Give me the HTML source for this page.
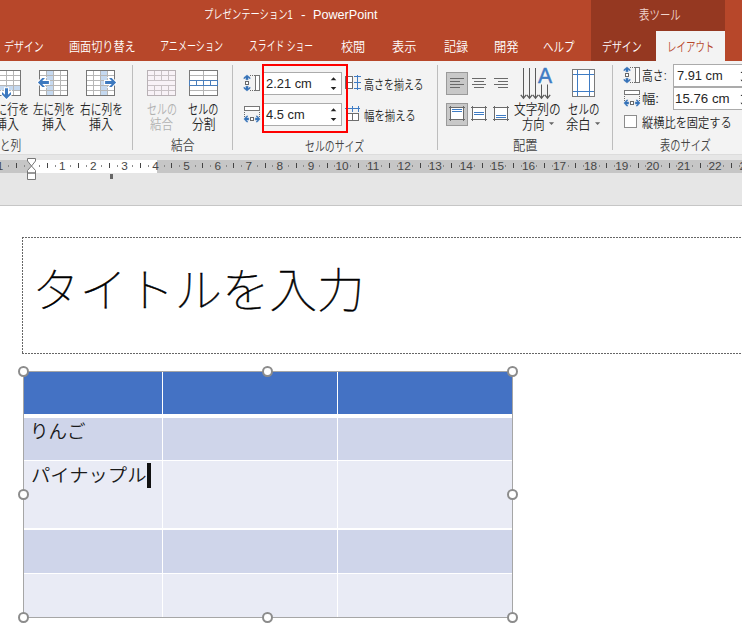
<!DOCTYPE html>
<html lang="ja">
<head>
<meta charset="utf-8">
<title>プレゼンテーション1 - PowerPoint</title>
<style>
html,body{margin:0;padding:0;}
body{width:742px;height:623px;overflow:hidden;position:relative;background:#fff;font-family:"Liberation Sans","Noto Sans CJK JP",sans-serif;}
.abs{position:absolute;}
.t{position:absolute;white-space:nowrap;transform-origin:0 50%;font-weight:350;}
#titlebar{left:0;top:0;width:742px;height:61px;background:#b7472a;}
#tooltab{left:591px;top:0;width:134px;height:61px;background:#953821;}
#acttab{left:656px;top:31px;width:69px;height:30px;background:#f3f3f3;}
#ribbon{left:0;top:61px;width:742px;height:93px;background:#f3f3f3;}
#gray{left:0;top:154px;width:742px;height:51px;background:#e6e6e6;}
#grayline{left:0;top:205px;width:742px;height:1px;background:#c6c6c6;}
.sep{position:absolute;top:65px;width:1px;height:85px;background:#bdbdbd;}
.inp{position:absolute;background:#fff;border:1px solid #ababab;box-sizing:border-box;}
#redbox{z-index:5;left:262px;top:64px;width:86px;height:69px;border:2px solid #fe0000;box-sizing:border-box;}
.selbtn{position:absolute;background:#c8c8c8;border:1px solid #9a9a9a;box-sizing:border-box;}
#rulerband{left:0;top:160px;width:742px;height:13px;background:#c6c6c6;}
#rulerwhite{left:32px;top:160px;width:125px;height:13px;background:#fff;}
#placeholder{left:22px;top:237px;width:760px;height:116px;border:1px dotted #6e6e6e;box-sizing:border-box;}
.cell{position:absolute;}
.rn{position:absolute;top:157.6px;width:24px;text-align:center;font-size:11.8px;line-height:17px;color:#474747;}
.hd{position:absolute;width:10.8px;height:10.8px;border:2px solid #8c8c8c;border-radius:50%;background:#fff;box-sizing:border-box;}
</style>
</head>
<body>
<div class="abs" id="titlebar"></div>
<div class="abs" id="tooltab"></div>
<div class="abs" id="acttab"></div>
<div class="abs" id="ribbon"></div>
<div class="abs" id="gray"></div>
<div class="abs" id="grayline"></div>
<div class="abs" style="left:0;top:154px;width:742px;height:1px;background:#dcdcdc"></div>
<div class="sep" style="left:132px"></div>
<div class="sep" style="left:232px"></div>
<div class="sep" style="left:437px"></div>
<div class="sep" style="left:612px"></div>

<!-- inputs -->
<div class="inp" style="left:263px;top:72px;width:79px;height:23px"></div>
<div class="inp" style="left:263px;top:103px;width:79px;height:23px"></div>
<div class="inp" style="left:673px;top:64px;width:80px;height:23px"></div>
<div class="inp" style="left:673px;top:87px;width:80px;height:23px"></div>
<div class="abs" style="left:624px;top:115px;width:13px;height:13px;border:1px solid #8c8c8c;background:#fff;box-sizing:border-box"></div>
<div class="selbtn" style="left:446px;top:72px;width:22px;height:23px"></div>
<div class="selbtn" style="left:446px;top:103px;width:22px;height:23px"></div>
<div class="abs" id="redbox"></div>

<!-- ruler -->
<div class="abs" id="rulerband"></div>
<div class="abs" id="rulerwhite"></div>
<div class="abs" style="left:8px;top:165px;width:1px;height:2px;background:#8a8a8a"></div>
<div class="abs" style="left:16px;top:163px;width:1px;height:5px;background:#444"></div>
<div class="abs" style="left:24px;top:165px;width:1px;height:2px;background:#8a8a8a"></div>
<div class="abs" style="left:39px;top:165px;width:1px;height:2px;background:#8a8a8a"></div>
<div class="abs" style="left:47px;top:163px;width:1px;height:5px;background:#444"></div>
<div class="abs" style="left:55px;top:165px;width:1px;height:2px;background:#8a8a8a"></div>
<div class="abs" style="left:70px;top:165px;width:1px;height:2px;background:#8a8a8a"></div>
<div class="abs" style="left:78px;top:163px;width:1px;height:5px;background:#444"></div>
<div class="abs" style="left:86px;top:165px;width:1px;height:2px;background:#8a8a8a"></div>
<div class="abs" style="left:101px;top:165px;width:1px;height:2px;background:#8a8a8a"></div>
<div class="abs" style="left:109px;top:163px;width:1px;height:5px;background:#444"></div>
<div class="abs" style="left:117px;top:165px;width:1px;height:2px;background:#8a8a8a"></div>
<div class="abs" style="left:132px;top:165px;width:1px;height:2px;background:#8a8a8a"></div>
<div class="abs" style="left:140px;top:163px;width:1px;height:5px;background:#444"></div>
<div class="abs" style="left:148px;top:165px;width:1px;height:2px;background:#8a8a8a"></div>
<div class="abs" style="left:164px;top:165px;width:1px;height:2px;background:#8a8a8a"></div>
<div class="abs" style="left:171px;top:163px;width:1px;height:5px;background:#444"></div>
<div class="abs" style="left:179px;top:165px;width:1px;height:2px;background:#8a8a8a"></div>
<div class="abs" style="left:195px;top:165px;width:1px;height:2px;background:#8a8a8a"></div>
<div class="abs" style="left:202px;top:163px;width:1px;height:5px;background:#444"></div>
<div class="abs" style="left:210px;top:165px;width:1px;height:2px;background:#8a8a8a"></div>
<div class="abs" style="left:226px;top:165px;width:1px;height:2px;background:#8a8a8a"></div>
<div class="abs" style="left:233px;top:163px;width:1px;height:5px;background:#444"></div>
<div class="abs" style="left:241px;top:165px;width:1px;height:2px;background:#8a8a8a"></div>
<div class="abs" style="left:257px;top:165px;width:1px;height:2px;background:#8a8a8a"></div>
<div class="abs" style="left:265px;top:163px;width:1px;height:5px;background:#444"></div>
<div class="abs" style="left:272px;top:165px;width:1px;height:2px;background:#8a8a8a"></div>
<div class="abs" style="left:288px;top:165px;width:1px;height:2px;background:#8a8a8a"></div>
<div class="abs" style="left:296px;top:163px;width:1px;height:5px;background:#444"></div>
<div class="abs" style="left:303px;top:165px;width:1px;height:2px;background:#8a8a8a"></div>
<div class="abs" style="left:319px;top:165px;width:1px;height:2px;background:#8a8a8a"></div>
<div class="abs" style="left:327px;top:163px;width:1px;height:5px;background:#444"></div>
<div class="abs" style="left:334px;top:165px;width:1px;height:2px;background:#8a8a8a"></div>
<div class="abs" style="left:350px;top:165px;width:1px;height:2px;background:#8a8a8a"></div>
<div class="abs" style="left:358px;top:163px;width:1px;height:5px;background:#444"></div>
<div class="abs" style="left:366px;top:165px;width:1px;height:2px;background:#8a8a8a"></div>
<div class="abs" style="left:381px;top:165px;width:1px;height:2px;background:#8a8a8a"></div>
<div class="abs" style="left:389px;top:163px;width:1px;height:5px;background:#444"></div>
<div class="abs" style="left:397px;top:165px;width:1px;height:2px;background:#8a8a8a"></div>
<div class="abs" style="left:412px;top:165px;width:1px;height:2px;background:#8a8a8a"></div>
<div class="abs" style="left:420px;top:163px;width:1px;height:5px;background:#444"></div>
<div class="abs" style="left:428px;top:165px;width:1px;height:2px;background:#8a8a8a"></div>
<div class="abs" style="left:443px;top:165px;width:1px;height:2px;background:#8a8a8a"></div>
<div class="abs" style="left:451px;top:163px;width:1px;height:5px;background:#444"></div>
<div class="abs" style="left:459px;top:165px;width:1px;height:2px;background:#8a8a8a"></div>
<div class="abs" style="left:474px;top:165px;width:1px;height:2px;background:#8a8a8a"></div>
<div class="abs" style="left:482px;top:163px;width:1px;height:5px;background:#444"></div>
<div class="abs" style="left:490px;top:165px;width:1px;height:2px;background:#8a8a8a"></div>
<div class="abs" style="left:505px;top:165px;width:1px;height:2px;background:#8a8a8a"></div>
<div class="abs" style="left:513px;top:163px;width:1px;height:5px;background:#444"></div>
<div class="abs" style="left:521px;top:165px;width:1px;height:2px;background:#8a8a8a"></div>
<div class="abs" style="left:536px;top:165px;width:1px;height:2px;background:#8a8a8a"></div>
<div class="abs" style="left:544px;top:163px;width:1px;height:5px;background:#444"></div>
<div class="abs" style="left:552px;top:165px;width:1px;height:2px;background:#8a8a8a"></div>
<div class="abs" style="left:568px;top:165px;width:1px;height:2px;background:#8a8a8a"></div>
<div class="abs" style="left:575px;top:163px;width:1px;height:5px;background:#444"></div>
<div class="abs" style="left:583px;top:165px;width:1px;height:2px;background:#8a8a8a"></div>
<div class="abs" style="left:599px;top:165px;width:1px;height:2px;background:#8a8a8a"></div>
<div class="abs" style="left:606px;top:163px;width:1px;height:5px;background:#444"></div>
<div class="abs" style="left:614px;top:165px;width:1px;height:2px;background:#8a8a8a"></div>
<div class="abs" style="left:630px;top:165px;width:1px;height:2px;background:#8a8a8a"></div>
<div class="abs" style="left:638px;top:163px;width:1px;height:5px;background:#444"></div>
<div class="abs" style="left:645px;top:165px;width:1px;height:2px;background:#8a8a8a"></div>
<div class="abs" style="left:661px;top:165px;width:1px;height:2px;background:#8a8a8a"></div>
<div class="abs" style="left:669px;top:163px;width:1px;height:5px;background:#444"></div>
<div class="abs" style="left:676px;top:165px;width:1px;height:2px;background:#8a8a8a"></div>
<div class="abs" style="left:692px;top:165px;width:1px;height:2px;background:#8a8a8a"></div>
<div class="abs" style="left:700px;top:163px;width:1px;height:5px;background:#444"></div>
<div class="abs" style="left:707px;top:165px;width:1px;height:2px;background:#8a8a8a"></div>
<div class="abs" style="left:723px;top:165px;width:1px;height:2px;background:#8a8a8a"></div>
<div class="abs" style="left:731px;top:163px;width:1px;height:5px;background:#444"></div>
<div class="abs" style="left:739px;top:165px;width:1px;height:2px;background:#8a8a8a"></div>
<span class="rn" style="left:-11.88px">1</span>
<span class="rn" style="left:50.28px">1</span>
<span class="rn" style="left:81.36px">2</span>
<span class="rn" style="left:112.44px">3</span>
<span class="rn" style="left:143.52px">4</span>
<span class="rn" style="left:174.60px">5</span>
<span class="rn" style="left:205.68px">6</span>
<span class="rn" style="left:236.76px">7</span>
<span class="rn" style="left:267.84px">8</span>
<span class="rn" style="left:298.92px">9</span>
<span class="rn" style="left:330.00px">10</span>
<span class="rn" style="left:361.08px">11</span>
<span class="rn" style="left:392.16px">12</span>
<span class="rn" style="left:423.24px">13</span>
<span class="rn" style="left:454.32px">14</span>
<span class="rn" style="left:485.40px">15</span>
<span class="rn" style="left:516.48px">16</span>
<span class="rn" style="left:547.56px">17</span>
<span class="rn" style="left:578.64px">18</span>
<span class="rn" style="left:609.72px">19</span>
<span class="rn" style="left:640.80px">20</span>
<span class="rn" style="left:671.88px">21</span>
<span class="rn" style="left:702.96px">22</span>
<span class="rn" style="left:734.04px">23</span>
<svg class="abs" style="left:26px;top:157px" width="12" height="24" viewBox="0 0 12 24"><path d="M1.5 1.5H9.5V4L5.5 9L1.5 4Z M5.5 9L9.5 13.5V16H1.5V13.5Z M1.5 16H9.5V22.5H1.5Z" fill="#fff" stroke="#777" stroke-width="1"/></svg>
<div class="abs" style="left:110px;top:174px;width:2.5px;height:5px;background:#666"></div>

<svg class="abs" style="left:0;top:0" width="742" height="160" viewBox="0 0 742 160">
<g shape-rendering="crispEdges">
<rect x="-8" y="70" width="28" height="25" fill="#fff"/>
<rect x="-8" y="86" width="28" height="4" fill="#c5d9f0"/>
<rect x="-1" y="70" width="1" height="25" fill="#b6b6b6"/>
<rect x="6" y="70" width="1" height="25" fill="#b6b6b6"/>
<rect x="13" y="70" width="1" height="25" fill="#b6b6b6"/>
<rect x="-8" y="75" width="28" height="1" fill="#b6b6b6"/>
<rect x="-8" y="80" width="28" height="1" fill="#b6b6b6"/>
<rect x="-8" y="85" width="28" height="1" fill="#b6b6b6"/>
<rect x="-8" y="90" width="28" height="1" fill="#b6b6b6"/>
<rect x="-7.5" y="70.5" width="28" height="25" fill="none" stroke="#767676" stroke-width="1"/>
<rect x="39" y="70" width="28" height="25" fill="#fff"/>
<rect x="47" y="70" width="6" height="25" fill="#c5d9f0"/>
<rect x="46" y="70" width="1" height="25" fill="#b6b6b6"/>
<rect x="53" y="70" width="1" height="25" fill="#b6b6b6"/>
<rect x="60" y="70" width="1" height="25" fill="#b6b6b6"/>
<rect x="39" y="75" width="28" height="1" fill="#b6b6b6"/>
<rect x="39" y="80" width="28" height="1" fill="#b6b6b6"/>
<rect x="39" y="85" width="28" height="1" fill="#b6b6b6"/>
<rect x="39" y="90" width="28" height="1" fill="#b6b6b6"/>
<rect x="39.5" y="70.5" width="28" height="25" fill="none" stroke="#767676" stroke-width="1"/>
<rect x="86" y="70" width="28" height="25" fill="#fff"/>
<rect x="101" y="70" width="6" height="25" fill="#c5d9f0"/>
<rect x="93" y="70" width="1" height="25" fill="#b6b6b6"/>
<rect x="100" y="70" width="1" height="25" fill="#b6b6b6"/>
<rect x="107" y="70" width="1" height="25" fill="#b6b6b6"/>
<rect x="86" y="75" width="28" height="1" fill="#b6b6b6"/>
<rect x="86" y="80" width="28" height="1" fill="#b6b6b6"/>
<rect x="86" y="85" width="28" height="1" fill="#b6b6b6"/>
<rect x="86" y="90" width="28" height="1" fill="#b6b6b6"/>
<rect x="86.5" y="70.5" width="28" height="25" fill="none" stroke="#767676" stroke-width="1"/>
<rect x="147" y="70" width="28" height="25" fill="#f8f2f7"/>
<rect x="154" y="70" width="1" height="10" fill="#c8c1c5"/>
<rect x="154" y="86" width="1" height="9" fill="#c8c1c5"/>
<rect x="161" y="70" width="1" height="10" fill="#c8c1c5"/>
<rect x="161" y="86" width="1" height="9" fill="#c8c1c5"/>
<rect x="168" y="70" width="1" height="10" fill="#c8c1c5"/>
<rect x="168" y="86" width="1" height="9" fill="#c8c1c5"/>
<rect x="147" y="75" width="28" height="1" fill="#c8c1c5"/>
<rect x="147" y="80" width="28" height="1" fill="#c8c1c5"/>
<rect x="147" y="85" width="28" height="1" fill="#c8c1c5"/>
<rect x="147" y="90" width="28" height="1" fill="#c8c1c5"/>
<rect x="147.5" y="70.5" width="28" height="25" fill="none" stroke="#b8b1b5" stroke-width="1"/>
<rect x="189" y="70" width="28" height="25" fill="#fff"/>
<rect x="203" y="70" width="1" height="25" fill="#b4b4b4"/>
<rect x="189" y="75" width="28" height="1" fill="#b4b4b4"/>
<rect x="189" y="80" width="28" height="1" fill="#b4b4b4"/>
<rect x="189" y="85" width="28" height="1" fill="#b4b4b4"/>
<rect x="189" y="90" width="28" height="1" fill="#b4b4b4"/>
<rect x="189.5" y="70.5" width="28" height="25" fill="none" stroke="#7a7a7a" stroke-width="1"/>
<rect x="189.5" y="80.5" width="28" height="5" fill="#fff" stroke="#4a7ebb" stroke-width="1"/>
<rect x="196" y="80" width="1" height="6" fill="#4a7ebb"/><rect x="203" y="80" width="1" height="6" fill="#4a7ebb"/><rect x="210" y="80" width="1" height="6" fill="#4a7ebb"/>
</g>
<polygon points="6.50,99.00 2.00,94.60 2.00,91.90 5.00,94.70 5.00,88.30 8.00,88.30 8.00,94.70 11.00,91.90 11.00,94.60" fill="#3d79bf" stroke="#fff" stroke-width="2" paint-order="stroke" stroke-linejoin="miter"/>
<polygon points="37.90,82.50 42.30,78.00 45.00,78.00 42.20,81.00 48.90,81.00 48.90,84.00 42.20,84.00 45.00,87.00 42.30,87.00" fill="#3d79bf" stroke="#fff" stroke-width="2" paint-order="stroke" stroke-linejoin="miter"/>
<polygon points="116.10,82.50 111.70,78.00 109.00,78.00 111.80,81.00 105.10,81.00 105.10,84.00 111.80,84.00 109.00,87.00 111.70,87.00" fill="#3d79bf" stroke="#fff" stroke-width="2" paint-order="stroke" stroke-linejoin="miter"/>
<polygon points="247.00,74.90 243.90,77.60 243.90,79.00 245.90,77.40 245.90,79.70 248.10,79.70 248.10,77.40 250.10,79.00 250.10,77.60" fill="#3572b8" stroke="#3572b8" stroke-width="0.4"/>
<polygon points="247.00,91.10 243.90,88.40 243.90,87.00 245.90,88.60 245.90,86.30 248.10,86.30 248.10,88.60 250.10,87.00 250.10,88.40" fill="#3572b8" stroke="#3572b8" stroke-width="0.4"/>
<rect x="245.5" y="81.5" width="3" height="3" fill="#fff" stroke="#6a6a6a" stroke-width="1"/>
<path d="M250 75.5H255M250 90.5H255" stroke="#6a6a6a" stroke-width="1" stroke-dasharray="1 1" fill="none"/>
<rect x="255.5" y="75.5" width="4" height="15" fill="#fff" stroke="#777" stroke-width="1"/>
<rect x="244.5" y="106.5" width="15" height="4" fill="#fff" stroke="#777" stroke-width="1"/>
<path d="M244.5 112V117M259.5 112V117" stroke="#6a6a6a" stroke-width="1" stroke-dasharray="1 1" fill="none"/>
<polygon points="243.90,119.00 246.60,115.90 248.00,115.90 246.40,117.90 248.70,117.90 248.70,120.10 246.40,120.10 248.00,122.10 246.60,122.10" fill="#3572b8" stroke="#3572b8" stroke-width="0.4"/>
<polygon points="260.10,119.00 257.40,115.90 256.00,115.90 257.60,117.90 255.30,117.90 255.30,120.10 257.60,120.10 256.00,122.10 257.40,122.10" fill="#3572b8" stroke="#3572b8" stroke-width="0.4"/>
<rect x="250.5" y="117.5" width="3" height="3" fill="#fff" stroke="#6a6a6a" stroke-width="1"/>
<polygon points="627.00,66.90 623.90,69.60 623.90,71.00 625.90,69.40 625.90,71.70 628.10,71.70 628.10,69.40 630.10,71.00 630.10,69.60" fill="#3572b8" stroke="#3572b8" stroke-width="0.4"/>
<polygon points="627.00,83.10 623.90,80.40 623.90,79.00 625.90,80.60 625.90,78.30 628.10,78.30 628.10,80.60 630.10,79.00 630.10,80.40" fill="#3572b8" stroke="#3572b8" stroke-width="0.4"/>
<rect x="625.5" y="73.5" width="3" height="3" fill="#fff" stroke="#6a6a6a" stroke-width="1"/>
<path d="M630 67.5H635M630 82.5H635" stroke="#6a6a6a" stroke-width="1" stroke-dasharray="1 1" fill="none"/>
<rect x="635.5" y="67.5" width="4" height="15" fill="#fff" stroke="#777" stroke-width="1"/>
<rect x="624.5" y="90.5" width="15" height="4" fill="#fff" stroke="#777" stroke-width="1"/>
<path d="M624.5 96V101M639.5 96V101" stroke="#6a6a6a" stroke-width="1" stroke-dasharray="1 1" fill="none"/>
<polygon points="623.90,103.00 626.60,99.90 628.00,99.90 626.40,101.90 628.70,101.90 628.70,104.10 626.40,104.10 628.00,106.10 626.60,106.10" fill="#3572b8" stroke="#3572b8" stroke-width="0.4"/>
<polygon points="640.10,103.00 637.40,99.90 636.00,99.90 637.60,101.90 635.30,101.90 635.30,104.10 637.60,104.10 636.00,106.10 637.40,106.10" fill="#3572b8" stroke="#3572b8" stroke-width="0.4"/>
<rect x="630.5" y="101.5" width="3" height="3" fill="#fff" stroke="#6a6a6a" stroke-width="1"/>
<g shape-rendering="crispEdges">
<rect x="345.5" y="76.5" width="7" height="12" fill="#fff" stroke="#6e6e6e"/><rect x="346" y="82" width="7" height="1" fill="#6e6e6e"/>
<rect x="357" y="75" width="1" height="15" fill="#3f7cc4"/><rect x="354" y="76" width="7" height="1" fill="#3f7cc4"/><rect x="354" y="82" width="7" height="1" fill="#3f7cc4"/><rect x="354" y="88" width="7" height="1" fill="#3f7cc4"/>
<rect x="346.5" y="113.5" width="12" height="7" fill="#fff" stroke="#6e6e6e"/><rect x="352" y="113" width="1" height="8" fill="#6e6e6e"/>
<rect x="345" y="108" width="15" height="1" fill="#3f7cc4"/><rect x="352" y="106" width="1" height="6" fill="#3f7cc4"/><rect x="358" y="106" width="1" height="6" fill="#3f7cc4"/>
<rect x="450" y="78" width="14" height="1" fill="#6a6a6a"/>
<rect x="472" y="78" width="14" height="1" fill="#6a6a6a"/>
<rect x="494" y="78" width="14" height="1" fill="#6a6a6a"/>
<rect x="450" y="81" width="10" height="1" fill="#6a6a6a"/>
<rect x="474" y="81" width="10" height="1" fill="#6a6a6a"/>
<rect x="498" y="81" width="10" height="1" fill="#6a6a6a"/>
<rect x="450" y="84" width="14" height="1" fill="#6a6a6a"/>
<rect x="472" y="84" width="14" height="1" fill="#6a6a6a"/>
<rect x="494" y="84" width="14" height="1" fill="#6a6a6a"/>
<rect x="450" y="87" width="10" height="1" fill="#6a6a6a"/>
<rect x="474" y="87" width="10" height="1" fill="#6a6a6a"/>
<rect x="498" y="87" width="10" height="1" fill="#6a6a6a"/>
<rect x="450.5" y="107.5" width="13" height="12" fill="#fff" stroke="#6a6a6a"/>
<rect x="450" y="106" width="1" height="15" fill="#6a6a6a"/><rect x="463" y="106" width="1" height="15" fill="#6a6a6a"/>
<rect x="449" y="107" width="16" height="1" fill="#6a6a6a"/><rect x="449" y="119" width="16" height="1" fill="#6a6a6a"/>
<rect x="452" y="109" width="10" height="1" fill="#3f7cc4"/><rect x="452" y="111" width="10" height="1" fill="#3f7cc4"/>
<rect x="472.5" y="107.5" width="13" height="12" fill="#fff" stroke="#6a6a6a"/>
<rect x="472" y="106" width="1" height="15" fill="#6a6a6a"/><rect x="485" y="106" width="1" height="15" fill="#6a6a6a"/>
<rect x="471" y="107" width="16" height="1" fill="#6a6a6a"/><rect x="471" y="119" width="16" height="1" fill="#6a6a6a"/>
<rect x="474" y="112" width="10" height="1" fill="#3f7cc4"/><rect x="474" y="114" width="10" height="1" fill="#3f7cc4"/>
<rect x="494.5" y="107.5" width="13" height="12" fill="#fff" stroke="#6a6a6a"/>
<rect x="494" y="106" width="1" height="15" fill="#6a6a6a"/><rect x="507" y="106" width="1" height="15" fill="#6a6a6a"/>
<rect x="493" y="107" width="16" height="1" fill="#6a6a6a"/><rect x="493" y="119" width="16" height="1" fill="#6a6a6a"/>
<rect x="496" y="115" width="10" height="1" fill="#3f7cc4"/><rect x="496" y="117" width="10" height="1" fill="#3f7cc4"/>
<rect x="572.5" y="69.5" width="22" height="27" fill="#fff" stroke="#7a7a7a"/>
<rect x="577" y="70" width="1" height="26" fill="#3f7cc4"/><rect x="589" y="70" width="1" height="26" fill="#3f7cc4"/><rect x="573" y="74" width="21" height="1" fill="#3f7cc4"/><rect x="573" y="91" width="21" height="1" fill="#3f7cc4"/>
</g>
<path d="M523.5 68V98" fill="none" stroke="#5a5a5a" stroke-width="1"/><path d="M520.8 94.8L523.5 98.2L526.2 94.8" fill="none" stroke="#5a5a5a" stroke-width="1.3"/>
<path d="M529.5 68V98" fill="none" stroke="#5a5a5a" stroke-width="1"/><path d="M526.8 94.8L529.5 98.2L532.2 94.8" fill="none" stroke="#5a5a5a" stroke-width="1.3"/>
<path d="M535.5 68V98" fill="none" stroke="#5a5a5a" stroke-width="1"/><path d="M532.8 94.8L535.5 98.2L538.2 94.8" fill="none" stroke="#5a5a5a" stroke-width="1.3"/>
<path d="M541.5 84.5V98" fill="none" stroke="#5a5a5a" stroke-width="1"/><path d="M538.8 94.8L541.5 98.2L544.2 94.8" fill="none" stroke="#5a5a5a" stroke-width="1.3"/>
<path d="M547.5 84.5V98" fill="none" stroke="#5a5a5a" stroke-width="1"/><path d="M544.8 94.8L547.5 98.2L550.2 94.8" fill="none" stroke="#5a5a5a" stroke-width="1.3"/>
<polygon points="330.7,80.2 333.5,77.2 336.3,80.2" fill="#222"/>
<polygon points="330.7,87.0 333.5,90.0 336.3,87.0" fill="#222"/>
<polygon points="330.7,111.3 333.5,108.3 336.3,111.3" fill="#222"/>
<polygon points="330.7,118.1 333.5,121.1 336.3,118.1" fill="#222"/>
<polygon points="740.5,73.0 743.3,70.0 746.0999999999999,73.0" fill="#222"/>
<polygon points="740.5,79.8 743.3,82.8 746.0999999999999,79.8" fill="#222"/>
<polygon points="740.5,96.0 743.3,93.0 746.0999999999999,96.0" fill="#222"/>
<polygon points="740.5,102.8 743.3,105.8 746.0999999999999,102.8" fill="#222"/>
<polygon points="548.9,122.2 554.1,122.2 551.5,124.9" fill="#666"/>
<polygon points="595.0,122.2 600.2,122.2 597.6,124.9" fill="#666"/>
</svg>

<!-- slide -->
<svg class="abs" style="left:0;top:230px" width="742" height="130" viewBox="0 230 742 130" shape-rendering="crispEdges"><path d="M22 237.5H742M22.5 237V354M22 353.5H742" fill="none" stroke="#666" stroke-width="1" stroke-dasharray="2 1"/></svg>
<div class="abs" style="left:23px;top:371px;width:490px;height:247px;background:#fff;border:1px solid #a6a6a6;box-sizing:border-box"></div>
<div class="cell" style="left:24px;top:372px;width:137.8px;height:42.10000000000002px;background:#4472c4"></div>
<div class="cell" style="left:163.2px;top:372px;width:173.60000000000002px;height:42.10000000000002px;background:#4472c4"></div>
<div class="cell" style="left:338.2px;top:372px;width:173.8px;height:42.10000000000002px;background:#4472c4"></div>
<div class="cell" style="left:24px;top:417.7px;width:137.8px;height:42.0px;background:#cfd5ea"></div>
<div class="cell" style="left:163.2px;top:417.7px;width:173.60000000000002px;height:42.0px;background:#cfd5ea"></div>
<div class="cell" style="left:338.2px;top:417.7px;width:173.8px;height:42.0px;background:#cfd5ea"></div>
<div class="cell" style="left:24px;top:461px;width:137.8px;height:67.10000000000002px;background:#e9ebf5"></div>
<div class="cell" style="left:163.2px;top:461px;width:173.60000000000002px;height:67.10000000000002px;background:#e9ebf5"></div>
<div class="cell" style="left:338.2px;top:461px;width:173.8px;height:67.10000000000002px;background:#e9ebf5"></div>
<div class="cell" style="left:24px;top:529.8px;width:137.8px;height:43.0px;background:#cfd5ea"></div>
<div class="cell" style="left:163.2px;top:529.8px;width:173.60000000000002px;height:43.0px;background:#cfd5ea"></div>
<div class="cell" style="left:338.2px;top:529.8px;width:173.8px;height:43.0px;background:#cfd5ea"></div>
<div class="cell" style="left:24px;top:574px;width:137.8px;height:43px;background:#e9ebf5"></div>
<div class="cell" style="left:163.2px;top:574px;width:173.60000000000002px;height:43px;background:#e9ebf5"></div>
<div class="cell" style="left:338.2px;top:574px;width:173.8px;height:43px;background:#e9ebf5"></div>
<div class="abs" style="left:147px;top:463px;width:3.6px;height:24.6px;background:#111"></div>
<div class="hd" style="left:18.10px;top:366.10px"></div>
<div class="hd" style="left:262.30px;top:366.10px"></div>
<div class="hd" style="left:507.10px;top:366.10px"></div>
<div class="hd" style="left:18.10px;top:489.00px"></div>
<div class="hd" style="left:507.10px;top:489.00px"></div>
<div class="hd" style="left:18.10px;top:612.10px"></div>
<div class="hd" style="left:262.30px;top:612.10px"></div>
<div class="hd" style="left:507.10px;top:612.10px"></div>

<span class="t" id="t0" style="left:203.96px;top:6.30px;font-size:12.5px;line-height:18.75px;color:#fff;transform:scaleX(0.7441);">プレゼンテーション1</span>
<span class="t" id="t1" style="left:301.40px;top:5.80px;font-size:12.5px;line-height:18.75px;color:#fff;transform:scaleX(1.1000);">-</span>
<span class="t" id="t2" style="left:313.49px;top:6.00px;font-size:12.5px;line-height:18.75px;color:#fff;transform:scaleX(1.0111);">PowerPoint</span>
<span class="t" id="t3" style="left:4.24px;top:36.80px;font-size:13px;line-height:19.5px;color:#fff;transform:scaleX(0.7620);">デザイン</span>
<span class="t" id="t4" style="left:69.14px;top:36.80px;font-size:13px;line-height:19.5px;color:#fff;transform:scaleX(0.8553);">画面切り替え</span>
<span class="t" id="t5" style="left:160.30px;top:35.80px;font-size:13px;line-height:19.5px;color:#fff;transform:scaleX(0.6966);">アニメーション</span>
<span class="t" id="t6" style="left:249.02px;top:36.30px;font-size:13px;line-height:19.5px;color:#fff;transform:scaleX(0.6785);">スライド ショー</span>
<span class="t" id="t7" style="left:341.30px;top:36.80px;font-size:13px;line-height:19.5px;color:#fff;transform:scaleX(0.9320);">校閲</span>
<span class="t" id="t8" style="left:392.00px;top:36.80px;font-size:13px;line-height:19.5px;color:#fff;transform:scaleX(0.9385);">表示</span>
<span class="t" id="t9" style="left:443.90px;top:36.80px;font-size:13px;line-height:19.5px;color:#fff;transform:scaleX(0.9269);">記録</span>
<span class="t" id="t10" style="left:493.66px;top:36.80px;font-size:13px;line-height:19.5px;color:#fff;transform:scaleX(0.9440);">開発</span>
<span class="t" id="t11" style="left:543.19px;top:37.30px;font-size:13px;line-height:19.5px;color:#fff;transform:scaleX(0.8105);">ヘルプ</span>
<span class="t" id="t12" style="left:602.24px;top:36.80px;font-size:13px;line-height:19.5px;color:#fff;transform:scaleX(0.7600);">デザイン</span>
<span class="t" id="t13" style="left:666.52px;top:36.80px;font-size:13px;line-height:19.5px;color:#b7472a;transform:scaleX(0.7283);">レイアウト</span>
<span class="t" id="t14" style="left:639.00px;top:5.00px;font-size:13px;line-height:19.5px;color:#f0d5cd;transform:scaleX(0.8039);">表ツール</span>
<span class="t" id="t15" style="left:-4.44px;top:100.30px;font-size:13.3px;line-height:19.950000000000003px;color:#262626;transform:scaleX(0.8405);">に行を</span>
<span class="t" id="t16" style="left:-5.20px;top:115.00px;font-size:13.3px;line-height:19.950000000000003px;color:#262626;transform:scaleX(0.9038);">挿入</span>
<span class="t" id="t17" style="left:33.00px;top:100.30px;font-size:13.3px;line-height:19.950000000000003px;color:#262626;transform:scaleX(0.7981);">左に列を</span>
<span class="t" id="t18" style="left:42.00px;top:114.80px;font-size:13.3px;line-height:19.950000000000003px;color:#262626;transform:scaleX(0.9038);">挿入</span>
<span class="t" id="t19" style="left:80.00px;top:100.30px;font-size:13.3px;line-height:19.950000000000003px;color:#262626;transform:scaleX(0.8077);">右に列を</span>
<span class="t" id="t20" style="left:89.00px;top:114.80px;font-size:13.3px;line-height:19.950000000000003px;color:#262626;transform:scaleX(0.9038);">挿入</span>
<span class="t" id="t21" style="left:146.75px;top:100.30px;font-size:13.3px;line-height:19.950000000000003px;color:#b1b1b1;transform:scaleX(0.7500);">セルの</span>
<span class="t" id="t22" style="left:150.00px;top:114.80px;font-size:13.3px;line-height:19.950000000000003px;color:#b1b1b1;transform:scaleX(0.8654);">結合</span>
<span class="t" id="t23" style="left:188.24px;top:100.30px;font-size:13.3px;line-height:19.950000000000003px;color:#262626;transform:scaleX(0.7632);">セルの</span>
<span class="t" id="t24" style="left:192.00px;top:114.80px;font-size:13.3px;line-height:19.950000000000003px;color:#262626;transform:scaleX(0.8846);">分割</span>
<span class="t" id="t25" style="left:-11.50px;top:136.40px;font-size:13.3px;line-height:19.950000000000003px;color:#444;transform:scaleX(0.8077);">行と列</span>
<span class="t" id="t26" style="left:171.00px;top:136.40px;font-size:13.3px;line-height:19.950000000000003px;color:#444;transform:scaleX(0.8846);">結合</span>
<span class="t" id="t27" style="left:305.26px;top:136.90px;font-size:13.3px;line-height:19.950000000000003px;color:#444;transform:scaleX(0.7436);">セルのサイズ</span>
<span class="t" id="t28" style="left:512.58px;top:135.90px;font-size:13.3px;line-height:19.950000000000003px;color:#444;transform:scaleX(0.9200);">配置</span>
<span class="t" id="t29" style="left:660.23px;top:136.40px;font-size:13.3px;line-height:19.950000000000003px;color:#444;transform:scaleX(0.7692);">表のサイズ</span>
<span class="t" id="t30" style="left:266.40px;top:74.00px;font-size:13px;line-height:19.5px;color:#262626;transform:scaleX(0.9913);">2.21 cm</span>
<span class="t" id="t31" style="left:266.40px;top:105.00px;font-size:13px;line-height:19.5px;color:#262626;transform:scaleX(0.9897);">4.5 cm</span>
<span class="t" id="t32" style="left:363.63px;top:75.00px;font-size:13px;line-height:19.5px;color:#262626;transform:scaleX(0.7680);">高さを揃える</span>
<span class="t" id="t33" style="left:363.60px;top:106.00px;font-size:13px;line-height:19.5px;color:#262626;transform:scaleX(0.8000);">幅を揃える</span>
<span class="t" id="t34" style="left:514.00px;top:100.30px;font-size:13.3px;line-height:19.950000000000003px;color:#262626;transform:scaleX(0.8769);">文字列の</span>
<span class="t" id="t35" style="left:521.50px;top:114.80px;font-size:13.3px;line-height:19.950000000000003px;color:#262626;transform:scaleX(0.8538);">方向</span>
<span class="t" id="t36" style="left:568.21px;top:100.30px;font-size:13.3px;line-height:19.950000000000003px;color:#262626;transform:scaleX(0.7895);">セルの</span>
<span class="t" id="t37" style="left:566.38px;top:114.80px;font-size:13.3px;line-height:19.950000000000003px;color:#262626;transform:scaleX(0.9250);">余白</span>
<span class="t" id="t38" style="left:642.47px;top:66.00px;font-size:13px;line-height:19.5px;color:#262626;transform:scaleX(0.8321);">高さ:</span>
<span class="t" id="t39" style="left:642.27px;top:89.00px;font-size:13px;line-height:19.5px;color:#262626;transform:scaleX(1.0267);">幅:</span>
<span class="t" id="t40" style="left:676.50px;top:66.00px;font-size:13px;line-height:19.5px;color:#262626;transform:scaleX(0.9891);">7.91 cm</span>
<span class="t" id="t41" style="left:675.48px;top:89.00px;font-size:13px;line-height:19.5px;color:#262626;transform:scaleX(1.0212);">15.76 cm</span>
<span class="t" id="t42" style="left:642.00px;top:113.30px;font-size:13px;line-height:19.5px;color:#262626;transform:scaleX(0.8627);">縦横比を固定する</span>
<span class="t" id="t43" style="left:537.80px;top:59.70px;font-size:21.5px;line-height:32.25px;color:#3f7cc4;transform:scaleX(0.9800);font-weight:400;-webkit-text-stroke:0.5px #3f7cc4;">A</span>
<span class="t" id="t44" style="left:32.14px;top:255.70px;font-size:47px;line-height:70.5px;color:#000;transform:scaleX(1.0107);font-weight:100;-webkit-text-stroke:0.45px #000;">タイトルを入力</span>
<span class="t" id="t45" style="left:30.13px;top:419.00px;font-size:18px;line-height:27.0px;color:#1a1a1a;transform:scaleX(1.0300);font-weight:350;">りんご</span>
<span class="t" id="t46" style="left:31.23px;top:463.20px;font-size:18px;line-height:27.0px;color:#1a1a1a;transform:scaleX(1.0726);font-weight:350;">パイナップル</span>
</body>
</html>
